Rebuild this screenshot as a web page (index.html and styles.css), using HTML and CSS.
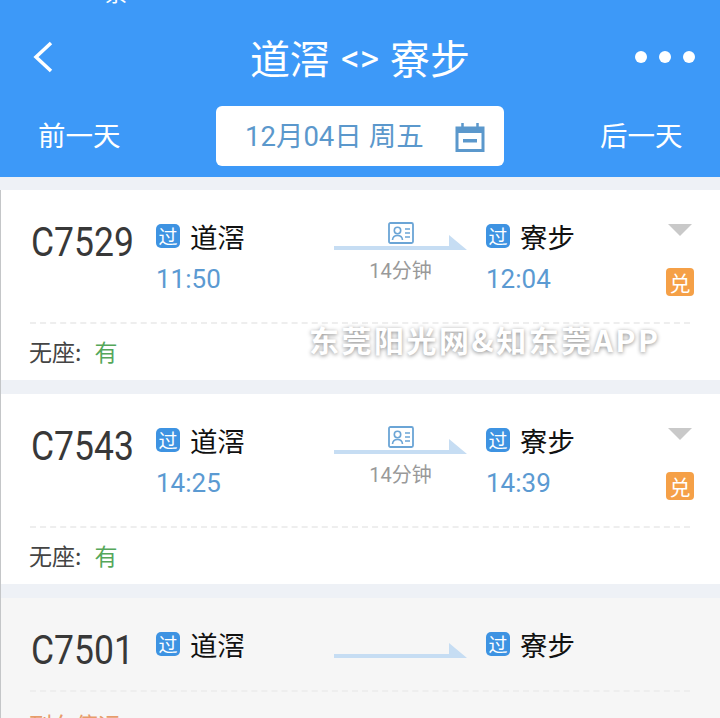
FILE: index.html
```html
<!DOCTYPE html>
<html lang="zh">
<head>
<meta charset="utf-8">
<title>道滘 &lt;&gt; 寮步</title>
<link rel="stylesheet" href="styles.css">
</head>
<body>
<div class="page">
  <header class="header">
    <div class="status">票</div>
    <div class="titlebar">
      <svg class="back" viewBox="0 0 22 32"><path d="M19 2 4 16l15 14" fill="none" stroke="#fff" stroke-width="3.5"/></svg>
      <h1 class="title">道滘 <span class="swap">&lt;&gt;</span> 寮步</h1>
      <div class="dots"><i></i><i></i><i></i></div>
    </div>
    <div class="datebar">
      <span class="daylink">前一天</span>
      <div class="datebox">
        <span>12月04日 周五</span>
        <svg class="cal" viewBox="0 0 30 30"><path d="M2 6h26v22.500H2z" fill="none" stroke="#5b98cc" stroke-width="3"/><path d="M2 5h26v6H2z" fill="#5b98cc"/><path d="M7.500 1v6M22.500 1v6" stroke="#5b98cc" stroke-width="2.500"/><path d="M8 17h14v3.500H8z" fill="#5b98cc"/></svg>
      </div>
      <span class="daylink">后一天</span>
    </div>
  </header>

  <section class="card">
    <div class="main">
      <div class="code">C7529</div>
      <div class="station">
        <div class="stname"><b class="pass">过</b>道滘</div>
        <div class="time">11:50</div>
      </div>
      <div class="route">
        <svg class="idcard" viewBox="0 0 26 22"><rect x="1" y="1" width="24" height="20" rx="1.500" fill="none" stroke="#6ba5d6" stroke-width="1.800"/><circle cx="9.500" cy="8.500" r="3.200" fill="none" stroke="#6ba5d6" stroke-width="1.600"/><path d="M4.500 18c.5-6 9.500-6 10 0M17 7h5M17 11h5M17 15h5" fill="none" stroke="#6ba5d6" stroke-width="1.600"/></svg>
        <svg class="arrow" viewBox="0 0 133 15"><path d="M0 11h115V0l18 15H0z" fill="#c6ddf3"/></svg>
        <div class="dur">14分钟</div>
      </div>
      <div class="station">
        <div class="stname"><b class="pass">过</b>寮步</div>
        <div class="time">12:04</div>
      </div>
      <div class="aside">
        <span class="tri"></span>
        <b class="dui">兑</b>
      </div>
    </div>
    <div class="foot">无座:<span class="ok">有</span></div>
  </section>

  <section class="card">
    <div class="main">
      <div class="code">C7543</div>
      <div class="station">
        <div class="stname"><b class="pass">过</b>道滘</div>
        <div class="time">14:25</div>
      </div>
      <div class="route">
        <svg class="idcard" viewBox="0 0 26 22"><rect x="1" y="1" width="24" height="20" rx="1.500" fill="none" stroke="#6ba5d6" stroke-width="1.800"/><circle cx="9.500" cy="8.500" r="3.200" fill="none" stroke="#6ba5d6" stroke-width="1.600"/><path d="M4.500 18c.5-6 9.500-6 10 0M17 7h5M17 11h5M17 15h5" fill="none" stroke="#6ba5d6" stroke-width="1.600"/></svg>
        <svg class="arrow" viewBox="0 0 133 15"><path d="M0 11h115V0l18 15H0z" fill="#c6ddf3"/></svg>
        <div class="dur">14分钟</div>
      </div>
      <div class="station">
        <div class="stname"><b class="pass">过</b>寮步</div>
        <div class="time">14:39</div>
      </div>
      <div class="aside">
        <span class="tri"></span>
        <b class="dui">兑</b>
      </div>
    </div>
    <div class="foot">无座:<span class="ok">有</span></div>
  </section>

  <section class="card card-off">
    <div class="main">
      <div class="code">C7501</div>
      <div class="station">
        <div class="stname"><b class="pass">过</b>道滘</div>
      </div>
      <div class="route">
        <svg class="idcard hidden" viewBox="0 0 26 22"></svg>
        <svg class="arrow" viewBox="0 0 133 15"><path d="M0 11h115V0l18 15H0z" fill="#c6ddf3"/></svg>
      </div>
      <div class="station">
        <div class="stname"><b class="pass">过</b>寮步</div>
      </div>
    </div>
    <div class="foot stop">列车停运</div>
  </section>

  <div class="watermark">东莞阳光网&amp;知东莞APP</div>
</div>
</body>
</html>
```
FILE: styles.css
```css
* { box-sizing: border-box; }
html, body { margin: 0; padding: 0; }
body { background: #eef1f6; font-family: Roboto, "Noto Sans CJK SC", sans-serif; }
.page { position: relative; width: 720px; height: 718px; overflow: hidden; background: #eef1f6; display: flex; flex-direction: column; }
.page::before { content: ""; position: absolute; left: 0; top: 190px; bottom: 0; width: 1px; background: #c4c6c8; z-index: 1; }

.header { height: 177px; margin-bottom: 13px; background: #3d99f8; color: #fff; flex: none; display: flex; flex-direction: column; position: relative; }
.status { position: absolute; left: 105px; top: -18px; font-size: 22px; line-height: 24px; color: #fff; }
.titlebar { height: 106px; padding: 32px 25px 0; display: grid; grid-template-columns: 1fr auto 1fr; align-items: start; }
.back { width: 22px; height: 32px; margin: 9px 0 0 7px; }
.title { margin: 0; font-size: 40px; line-height: 50px; font-weight: 400; font-family: "Noto Sans CJK SC", sans-serif; white-space: nowrap; }
.swap { font-family: Roboto, sans-serif; font-size: 37px; vertical-align: 3px; margin: 0 2px; }
.dots { display: flex; gap: 12px; margin-top: 19px; justify-content: flex-end; }
.dots i { width: 12px; height: 12px; border-radius: 50%; background: #fff; }
.datebar { height: 60px; padding: 0 38px; display: flex; align-items: center; justify-content: space-between; }
.daylink { font-size: 27.5px; font-family: "Noto Sans CJK SC", sans-serif; width: 82px; white-space: nowrap; position: relative; top: -2px; }
.datebox { width: 288px; height: 60px; background: #fff; border-radius: 6px; color: #5b98cc; font-size: 27.5px; display: flex; align-items: center; justify-content: space-between; padding: 0 19px 0 29px; white-space: nowrap; }
.datebox span { position: relative; top: -2px; }
.cal { width: 30px; height: 30px; flex: none; position: relative; top: 1px; }

.card { height: 190px; margin-bottom: 14px; background: #fff; padding: 0 30px; flex: none; }
.card-off { background: #f6f6f6; height: 130px; margin: 0; }
.main { height: 134px; display: grid; grid-template-columns: 126px 178px 133px 19px 180px 28px; padding-top: 30px; border-bottom: 2px dashed #eeeeee; }
.card-off .main { height: 94px; }
.code { font-size: 40px; line-height: 44px; color: #383838; transform: scaleX(.887); transform-origin: left top; margin: 1px 0 0 1px; }
.route + .station { grid-column: 5; }
.stname { display: flex; align-items: center; gap: 10px; font-size: 27.5px; line-height: 32px; color: #111; font-family: "Noto Sans CJK SC", sans-serif; }
.pass { width: 24px; height: 24px; border-radius: 5px; background: #3e93e2; color: #fff; font-size: 19px; line-height: 24px; text-align: center; font-weight: 400; }
.time { font-size: 26px; line-height: 32px; color: #5b9ad2; margin-top: 11px; }
.route { display: flex; flex-direction: column; align-items: center; }
.idcard { width: 26px; height: 22px; margin-top: 2px; flex: none; }
.hidden { visibility: hidden; }
.arrow { width: 133px; height: 15px; display: block; margin-top: -9px; flex: none; }
.dur { font-size: 20px; line-height: 24px; color: #999; margin-top: 9px; }
.aside { display: flex; flex-direction: column; align-items: center; }
.tri { width: 0; height: 0; border-left: 12px solid transparent; border-right: 12px solid transparent; border-top: 12px solid #c9c9c9; margin-top: 4px; }
.dui { width: 28px; height: 28px; margin-top: 32px; border-radius: 4px; background: #f5a047; color: #fff; font-size: 21px; line-height: 28px; text-align: center; font-weight: 400; font-family: "Noto Sans CJK SC", sans-serif; }
.foot { height: 53px; display: flex; align-items: center; font-size: 23px; color: #444; font-family: "Noto Sans CJK SC", sans-serif; margin-left: -1px; }
.ok { color: #55a75a; margin-left: 13px; }
.stop { color: #e79c6b; align-items: flex-start; padding-top: 15px; }

.watermark { position: absolute; left: 309px; top: 318px; font-size: 30px; line-height: 42px; letter-spacing: 2.500px; color: #fff; font-family: "Noto Sans CJK SC", sans-serif; font-weight: 700; text-shadow: 0 1px 4px rgba(0,0,0,.45); white-space: nowrap; }
```
